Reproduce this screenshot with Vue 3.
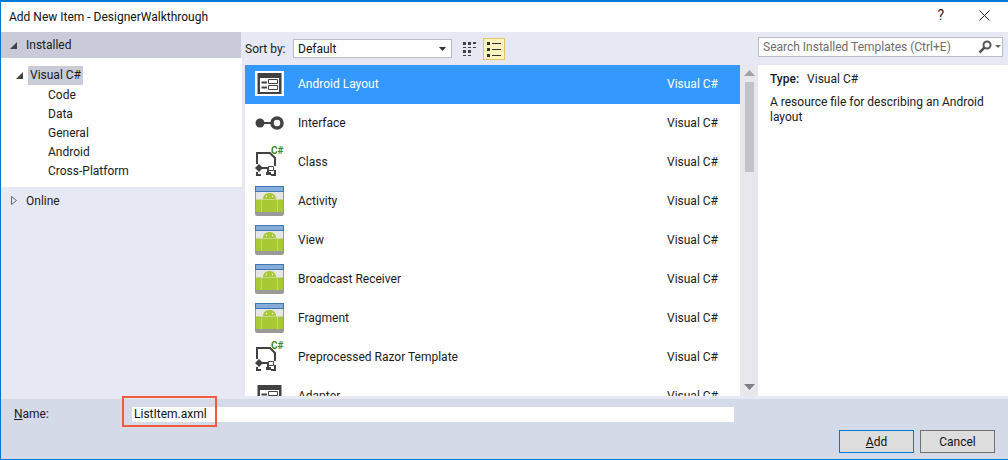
<template>
  <div class="dialog">
    <div class="titlebar">
      <span class="title">Add New Item - DesignerWalkthrough</span>
      <span class="help">?</span>
      <svg class="close" width="11" height="11" viewBox="0 0 11 11">
        <path d="M.5 .5l10 10M10.500 .5l-10 10" stroke="#222" stroke-width="1" fill="none" />
      </svg>
    </div>

    <div class="main">
      <!-- left tree -->
      <div class="side">
        <div class="side-head">
          <svg class="tri" width="7" height="7" viewBox="0 0 7 7"><path d="M7 0v7H0z" fill="#444" /></svg>
          <span>Installed</span>
        </div>
        <div class="tree">
          <div class="tree-root">
            <svg class="tri" width="7" height="7" viewBox="0 0 7 7"><path d="M7 0v7H0z" fill="#444" /></svg>
            <span class="tree-sel">Visual C#</span>
          </div>
          <div v-for="t in treeItems" :key="t" class="tree-item">{{ t }}</div>
        </div>
        <div class="side-online">
          <svg class="tri" width="6" height="9" viewBox="0 0 6 9"><path d="M.5 .5l5 4-5 4z" fill="#e6e9f4" stroke="#666" /></svg>
          <span>Online</span>
        </div>
      </div>

      <!-- middle list -->
      <div class="middle">
        <div class="toolbar">
          <span class="sort-label">Sort by:</span>
          <div class="select">
            <span>Default</span>
            <svg width="7" height="4" viewBox="0 0 7 4"><path d="M0 0h7L3.500 4z" fill="#333" /></svg>
          </div>
          <svg class="view-btn" width="22" height="22" viewBox="0 0 22 22">
            <path d="M5 4h3v3H5zM10 4h3v3h-3zM15 4h3v2h-3zM5 9h3v1H5zM10 9h3v1h-3zM15 9h3v1h-3zM5 12h3v3H5zM10 12h3v3h-3zM5 17h3v1H5zM10 17h3v1h-3z" fill="#424242" />
          </svg>
          <div class="view-btn active">
            <svg width="20" height="20" viewBox="0 0 20 20">
              <path d="M3 3h3v3H3zM3 9h3v3H3zM3 15h3v3H3zM8 4h9v1H8zM8 10h9v1H8zM8 16h9v1H8z" fill="#333" />
            </svg>
          </div>
        </div>
        <div class="list-wrap">
          <div class="list">
            <div v-for="(row, i) in rows" :key="row.name" class="row" :class="{ selected: i === 0 }">
              <div class="row-icon">
                <svg v-if="row.icon === 'layout'" width="30" height="26" viewBox="0 0 30 26">
                  <rect width="29" height="25" fill="#fff" />
                  <rect x="2.500" y="2" width="24" height="21" fill="#424242" />
                  <rect x="5" y="7" width="19" height="14" fill="#fff" />
                  <path d="M6.500 10.500h5.500v2h-5.500zM6.500 15.500h5.500v2h-5.500z" fill="#424242" />
                  <path d="M13.500 8.500h9v4h-9zM13.500 14.500h9v4h-9z" fill="#fff" stroke="#424242" />
                </svg>
                <svg v-else-if="row.icon === 'iface'" width="30" height="16" viewBox="0 0 30 16">
                  <circle cx="5" cy="8" r="4.500" fill="#424242" />
                  <rect x="8" y="7" width="10" height="2" fill="#424242" />
                  <circle cx="22" cy="8" r="5" fill="#fff" stroke="#424242" stroke-width="3.500" />
                </svg>
                <svg v-else-if="row.icon === 'class'" width="30" height="34" viewBox="0 0 30 34">
                  <path d="M2 19V8h13l5 5v8" fill="#fff" stroke="#424242" stroke-width="2" />
                  <path d="M2 27v3h4M16 30h4v-5" fill="none" stroke="#424242" stroke-width="2" />
                  <path d="M0 23l4-4 4 4-4 4z" fill="#424242" />
                  <path d="M7 23h6v6h2" fill="none" stroke="#424242" stroke-width="2" />
                  <path d="M13.500 21.500h5v4h-5z" fill="#fff" stroke="#424242" />
                  <path d="M11 27h5v3h-5z" fill="#424242" />
                  <text x="16" y="9" class="csharp">C#</text>
                </svg>
                <svg v-else width="30" height="30" viewBox="0 0 30 30">
                  <rect x=".5" y=".5" width="28" height="29" rx="1" fill="#e6e6e4" stroke="#9a9a9a" />
                  <rect x=".5" y=".5" width="28" height="5" fill="#86acd8" stroke="#3f76b8" />
                  <path d="M1 13.500h5v12.500H1zM23 13.500h5v12.500h-5zM7 13.500h15v12.500H7z" fill="#a7c936" />
                  <path d="M6 13.500h1v12.500H6zM22 13.500h1v12.500h-1z" fill="#c4d878" />
                  <path d="M8 13c0-8 13-8 13 0z" fill="#a7c936" />
                  <circle cx="11.500" cy="10.500" r=".7" fill="#fff" />
                  <circle cx="17.500" cy="10.500" r=".7" fill="#fff" />
                  <rect x="1" y="26" width="27" height="3" fill="#9a9a9a" />
                </svg>
              </div>
              <span class="row-name">{{ row.name }}</span>
              <span class="row-type">Visual C#</span>
            </div>
          </div>
          <div class="scrollbar">
            <svg width="11" height="6" viewBox="0 0 11 6"><path d="M5.500 0L11 6H0z" fill="#a0a1a8" /></svg>
            <div class="thumb"></div>
            <svg width="11" height="6" viewBox="0 0 11 6"><path d="M0 0h11L5.500 6z" fill="#7f8087" /></svg>
          </div>
        </div>
      </div>

      <!-- right details -->
      <div class="right">
        <div class="search">
          <span>Search Installed Templates (Ctrl+E)</span>
          <svg width="24" height="14" viewBox="0 0 24 14">
            <circle cx="9" cy="5" r="3.500" fill="none" stroke="#555" stroke-width="2" />
            <path d="M6.500 7.500L1.500 12.500" stroke="#555" stroke-width="2.500" fill="none" />
            <path d="M17 5h6l-3 3z" fill="#666" />
          </svg>
        </div>
        <div class="details">
          <div class="type-line"><b>Type:</b><span>Visual C#</span></div>
          <p>A resource file for describing an Android layout</p>
        </div>
      </div>
    </div>

    <div class="footer">
      <div class="name-row">
        <span class="name-label"><u>N</u>ame:</span>
        <div class="name-input">ListItem.axml</div>
      </div>
      <div class="buttons">
        <button class="btn primary"><u>A</u>dd</button>
        <button class="btn">Cancel</button>
      </div>
      <div class="callout"></div>
    </div>
  </div>
</template>

<script setup>
const treeItems = ['Code', 'Data', 'General', 'Android', 'Cross-Platform']

const rows = [
  { name: 'Android Layout', icon: 'layout' },
  { name: 'Interface', icon: 'iface' },
  { name: 'Class', icon: 'class' },
  { name: 'Activity', icon: 'android' },
  { name: 'View', icon: 'android' },
  { name: 'Broadcast Receiver', icon: 'android' },
  { name: 'Fragment', icon: 'android' },
  { name: 'Preprocessed Razor Template', icon: 'class' },
  { name: 'Adapter', icon: 'layout' },
]
</script>

<style>
body {
  margin: 0;
}
</style>

<style scoped>
.dialog {
  width: 1008px;
  height: 460px;
  box-sizing: border-box;
  border: 1px solid #0078d7;
  border-top-width: 2px;
  border-right: 0;
  display: flex;
  flex-direction: column;
  background: #e6e9f4;
  font-family: Roboto, "Noto Sans", sans-serif;
  font-size: 12px;
  color: #1a1a1a;
  overflow: hidden;
}
.titlebar {
  height: 30px;
  flex: none;
  background: #fff;
  display: flex;
  align-items: center;
  padding-left: 8px;
}
.title {
  font-size: 12px;
  flex: 1;
  color: #111;
}
.help {
  font-size: 14px;
  margin-right: 35px;
  margin-top: -4px;
}
.close {
  margin-right: 18px;
  margin-top: -4px;
}
.main {
  flex: none;
  display: flex;
  height: 364px;
}
.side {
  width: 240px;
  flex: none;
  margin-right: 4px;
}
.side-head {
  height: 26px;
  background: #c9cbd8;
  display: flex;
  align-items: center;
  padding-left: 9px;
  gap: 9px;
}
.tree {
  background: #fff;
  height: 129px;
  padding-top: 8px;
  box-sizing: border-box;
  width: 241px;
}
.tree-root {
  height: 19px;
  display: flex;
  align-items: center;
  padding-left: 15px;
}
.tree-root .tri {
  margin-right: 5px;
}
.tree-sel {
  background: #c9cbd8;
  padding: 0 2px;
  line-height: 19px;
}
.tree-item {
  height: 19px;
  line-height: 21px;
  padding-left: 47px;
}
.side-online {
  height: 27px;
  display: flex;
  align-items: center;
  padding-left: 10px;
  gap: 9px;
}
.middle {
  width: 513px;
  flex: none;
  display: flex;
  flex-direction: column;
}
.toolbar {
  height: 33px;
  flex: none;
  display: flex;
  align-items: center;
}
.sort-label {
  width: 48px;
  flex: none;
}
.select {
  width: 159px;
  height: 19px;
  box-sizing: border-box;
  border: 1px solid #b9bcc7;
  background: #fff;
  display: flex;
  align-items: center;
  justify-content: space-between;
  padding: 0 5px 0 4px;
  margin-right: 6px;
  color: #111;
}
.view-btn {
  width: 22px;
  height: 22px;
  flex: none;
  box-sizing: border-box;
}
.view-btn.active {
  background: #fdf4bf;
  border: 1px solid #e5c365;
  display: flex;
  align-items: center;
  justify-content: center;
  margin-left: 3px;
}
.list-wrap {
  height: 331px;
  display: flex;
}
.list {
  width: 495px;
  background: #fff;
  overflow: hidden;
}
.row {
  height: 39px;
  box-sizing: border-box;
  padding: 0 0 1px 10px;
  display: flex;
  align-items: center;
}
.row.selected {
  background: #3399ff;
  color: #fff;
}
.row-icon {
  width: 30px;
  height: 34px;
  flex: none;
  display: flex;
  align-items: center;
  justify-content: center;
  margin-right: 13px;
}
.row-name {
  flex: 1;
}
.row-type {
  width: 73px;
  flex: none;
}
.csharp {
  font-size: 10px;
  font-weight: 700;
  fill: #3a8a2e;
}
.scrollbar {
  width: 18px;
  background: #e8e8ec;
  display: flex;
  flex-direction: column;
  align-items: center;
  padding: 5px 0 6px;
  box-sizing: border-box;
}
.thumb {
  width: 9px;
  height: 90px;
  background: #c2c3c9;
  margin: 6px 0 auto;
}
.right {
  flex: 1;
  display: flex;
  flex-direction: column;
}
.search {
  height: 20px;
  margin: 5px 5px 8px 0;
  box-sizing: border-box;
  border: 1px solid #b9bcc7;
  background: #fff;
  display: flex;
  align-items: center;
  justify-content: space-between;
  padding-left: 4px;
  color: #6d6d6d;
}
.details {
  height: 331px;
  background: #fff;
  padding: 6px 12px;
  box-sizing: border-box;
}
.type-line {
  display: flex;
  gap: 8px;
  line-height: 16px;
}
.type-line b {
  font-weight: 500;
}
.details p {
  margin: 8px 0 0;
  line-height: 15px;
}
.footer {
  height: 60px;
  flex: none;
  margin-top: 3px;
  background: #d5dae8;
  position: relative;
}
.name-row {
  display: flex;
  align-items: center;
  padding-top: 5px;
  height: 20px;
}
.name-label {
  width: 131px;
  padding-left: 13px;
  box-sizing: border-box;
}
.name-input {
  width: 602px;
  height: 15px;
  line-height: 15px;
  background: #fff;
  padding-left: 2px;
  box-sizing: border-box;
  color: #111;
}
.buttons {
  display: flex;
  justify-content: flex-end;
  gap: 6px;
  margin-top: 6px;
  padding-right: 13px;
}
.btn {
  width: 75px;
  height: 23px;
  padding: 0;
  font: inherit;
  color: #111;
  background: #dddddd;
  border: 1px solid #707070;
}
.btn.primary {
  border-color: #0078d7;
}
.callout {
  position: absolute;
  left: 121px;
  top: -3px;
  width: 95px;
  height: 31px;
  box-sizing: border-box;
  border: 2px solid #f15a3c;
}
</style>
